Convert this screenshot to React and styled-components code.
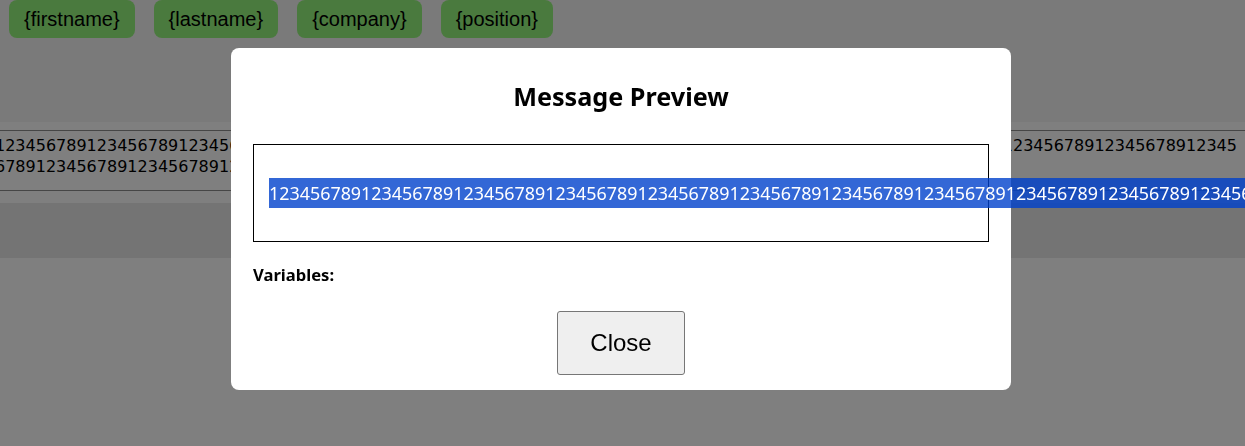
import styled, { createGlobalStyle } from "styled-components";

const GlobalStyle = createGlobalStyle`
    html, body {
        margin: 0;
        padding: 0;
        background: #ffffff;
        overflow: hidden;
        font-family: "Noto Sans", "Open Sans", sans-serif;
    }
`

const TAGS = ["{firstname}", "{lastname}", "{company}", "{position}"];
const DIGITS = "123456789".repeat(30);

const Header = styled.div`
    height: 122px;
    background: #f4f4f4;
    padding: 0 9px;
`

const TagRow = styled.div`
    display: flex;
    gap: 19px;
`

const Tag = styled.button`
    font-family: "Liberation Sans", Arial, sans-serif;
    font-size: 20px;
    line-height: 24px;
    color: #000;
    background: #94f47c;
    border: none;
    border-radius: 8px;
    padding: 7px 15px;
    margin: 0;
`

const Strip = styled.div`
    background: #fefefe;
    padding: 8px 0 12px;
`

const TextBlock = styled.div`
    height: 59px;
    border-top: 1px solid #8c8c8c;
    border-bottom: 1px solid #8c8c8c;
    overflow: hidden;
`

const Digits = styled.div`
    font-family: "DejaVu Sans", sans-serif;
    font-size: 16px;
    line-height: 21.3px;
    color: #000;
    margin: 4px 0 0 -5px;
    width: 1247px;
    word-break: break-all;
`

const Footer = styled.div`
    height: 55px;
    background: #e8e8e8;
`

const Overlay = styled.div`
    position: fixed;
    inset: 0;
    background: rgba(0, 0, 0, 0.5);
    display: flex;
    justify-content: center;
    align-items: flex-start;
    padding: 48px 3px 0 0;
`

const Modal = styled.div`
    width: 780px;
    box-sizing: border-box;
    background: #fff;
    border-radius: 8px;
    padding: 32px 22px 15px;
    display: flex;
    flex-direction: column;
`

const Title = styled.h2`
    margin: 0 0 32px;
    font-size: 25.2px;
    line-height: 32px;
    font-weight: 700;
    text-align: center;
    color: #000;
`

const PreviewBox = styled.div`
    height: 98px;
    box-sizing: border-box;
    border: 1px solid #000;
    padding: 0 15px;
    display: flex;
    align-items: center;
`

const Selected = styled.span`
    display: block;
    white-space: nowrap;
    height: 30px;
    line-height: 30px;
    font-size: 17.9px;
    color: #fff;
    background: rgba(0, 65, 204, 0.8);
`

const Label = styled.div`
    margin: 22px 0 25px;
    font-size: 16.6px;
    line-height: 22px;
    font-weight: 700;
    color: #000;
`

const CloseButton = styled.button`
    align-self: center;
    height: 64px;
    padding: 0 32px;
    font-family: "Liberation Sans", Arial, sans-serif;
    font-size: 24px;
    color: #000;
    background: #efefef;
    border: 1px solid #767676;
    border-radius: 3px;
`

function App() {
    return (
        <>
            <GlobalStyle />
            <Header>
                <TagRow>
                    {TAGS.map((t) => <Tag key={t}>{t}</Tag>)}
                </TagRow>
            </Header>
            <Strip>
                <TextBlock>
                    <Digits>{DIGITS.slice(0, 212)}</Digits>
                </TextBlock>
            </Strip>
            <Footer />
            <Overlay>
                <Modal>
                    <Title>Message Preview</Title>
                    <PreviewBox>
                        <Selected>{DIGITS.slice(0, 110)}</Selected>
                    </PreviewBox>
                    <Label>Variables:</Label>
                    <CloseButton>Close</CloseButton>
                </Modal>
            </Overlay>
        </>
    );
}

export default App
